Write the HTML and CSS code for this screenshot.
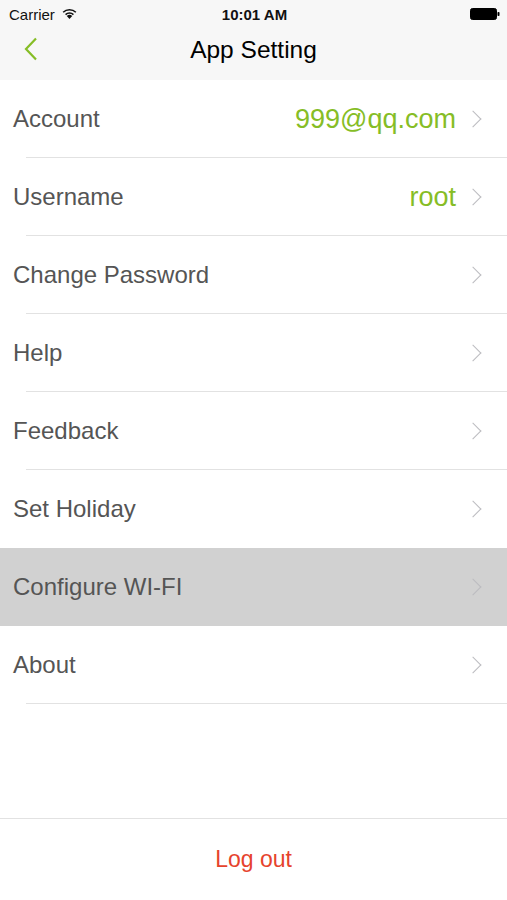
FILE: index.html
```html
<!DOCTYPE html>
<html>
<head>
<meta charset="utf-8">
<link rel="stylesheet" href="styles.css">
</head>
<body>
<div class="screen">
  <header class="top">
    <div class="status">
      <div class="status-left">
        <span class="carrier">Carrier</span>
        <svg class="wifi" width="17" height="12" viewBox="0 0 15 11"><path d="M7.5 11 L5 8.2 A3.6 3.6 0 0 1 10 8.2 Z" fill="#111"/><path d="M3.4 6.5 A5.8 5.8 0 0 1 11.6 6.5 L10.6 7.5 A4.4 4.4 0 0 0 4.4 7.5 Z" fill="#111"/><path d="M1.2 4.3 A9 9 0 0 1 13.8 4.3 L12.8 5.3 A7.6 7.6 0 0 0 2.2 5.3 Z" fill="#111"/></svg>
      </div>
      <span class="time">10:01 AM</span>
      <div class="status-right">
        <svg class="battery" width="30" height="12" viewBox="0 0 30 12"><rect x="0.5" y="0.5" width="26" height="11" rx="2" fill="#000" stroke="#000"/><rect x="27.5" y="4" width="2" height="4" rx="0.8" fill="#000"/></svg>
      </div>
    </div>
    <div class="nav">
      <svg class="back" width="14" height="24" viewBox="0 0 14 24"><path d="M12 1.5 L2 12 L12 22.5" fill="none" stroke="#86bd26" stroke-width="2.2"/></svg>
      <h1 class="title">App Setting</h1>
    </div>
  </header>
  <ul class="list">
    <li class="row"><span class="label">Account</span><span class="value">999@qq.com</span><span class="chev"></span></li>
    <li class="row"><span class="label">Username</span><span class="value">root</span><span class="chev"></span></li>
    <li class="row"><span class="label">Change Password</span><span class="chev"></span></li>
    <li class="row"><span class="label">Help</span><span class="chev"></span></li>
    <li class="row"><span class="label">Feedback</span><span class="chev"></span></li>
    <li class="row no-sep"><span class="label">Set Holiday</span><span class="chev"></span></li>
    <li class="row selected"><span class="label">Configure WI-FI</span><span class="chev"></span></li>
    <li class="row"><span class="label">About</span><span class="chev"></span></li>
  </ul>
  <footer class="logout">
    <span>Log out</span>
  </footer>
</div>
</body>
</html>
```
FILE: styles.css
```css
* { box-sizing: border-box; }
html, body { margin: 0; padding: 0; background: #fff; }
body { font-family: "Liberation Sans", Arial, sans-serif; }
.screen { width: 507px; height: 900px; display: flex; flex-direction: column; }
.top { background: #f7f7f7; height: 80px; display: flex; flex-direction: column; }
.status { height: 28px; display: flex; align-items: center; justify-content: space-between; padding: 0 7px 0 9px; }
.status-left { display: flex; align-items: center; gap: 6px; width: 120px; }
.carrier { font-size: 15px; color: #111; }
.wifi { margin-top: -2px; }
.time { font-size: 15px; font-weight: bold; color: #111; }
.status-right { width: 120px; display: flex; justify-content: flex-end; }
.nav { flex: 1; display: flex; align-items: center; justify-content: center; position: relative; padding-bottom: 9px; }
.back { position: absolute; left: 24px; top: 9px; }
.title { margin: 0; font-size: 24.5px; font-weight: normal; color: #000; }
.list { list-style: none; margin: 0; padding: 0; }
.row { height: 78px; display: flex; align-items: center; padding: 0 26px 0 13px; position: relative; }
.row::after { content: ""; position: absolute; left: 26px; right: 0; bottom: 0; height: 1px; background: #e2e2e2; }
.row.no-sep::after, .row.selected::after { display: none; }
.row.selected { background: #d1d1d1; }
.label { flex: 1; font-size: 24px; color: #555; }
.value { font-size: 27px; color: #86bd26; margin-right: 16px; }
.chev { width: 9px; height: 16px; position: relative; }
.chev::before { content: ""; position: absolute; width: 11px; height: 11px; border-top: 1.5px solid #bcbcc0; border-right: 1.5px solid #bcbcc0; transform: rotate(45deg); left: -5px; top: 2px; }
.logout { margin-top: auto; height: 82px; border-top: 1px solid #e2e2e2; display: flex; align-items: center; justify-content: center; padding-bottom: 1px; }
.logout span { font-size: 23px; color: #e6432d; }
```
